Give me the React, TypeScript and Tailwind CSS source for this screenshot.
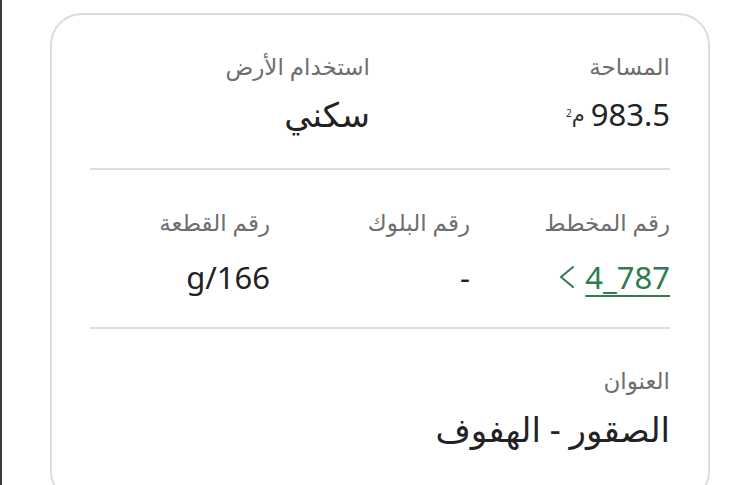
import * as React from "react"

const font = { fontFamily: '"Noto Sans", "DejaVu Sans", sans-serif' }

function Field({ label, children, className }: { label: string; children: React.ReactNode; className?: string }) {
  return (
    <div className={className}>
      <div className="text-[23px] leading-[30px] text-[#6e6e6e]">{label}</div>
      {children}
    </div>
  )
}

export default function App() {
  return (
    <div className="h-[485px] w-[750px] overflow-hidden bg-white border-l-2 border-[#3a3a3a]" style={font}>
      <div dir="rtl" className="ml-[48px] mt-[13px] w-[660px] h-[490px] rounded-[32px] border-2 border-[#dcdcdc] bg-white px-[38px]">
        <div className="flex pt-[36px] pb-[34px] border-b-2 border-[#dedede]">
          <Field label="المساحة" className="w-[300px]">
            <div className="mt-[13px] flex items-center gap-[6px] text-[31px] leading-[40px] text-[#222]">
              <span>983.5</span>
              <span className="text-[21px] text-[#333]">
                م<sup className="text-[10px]">2</sup>
              </span>
            </div>
          </Field>
          <Field label="استخدام الأرض" className="w-[280px]">
            <div className="mt-[13px] text-[34px] leading-[40px] text-[#222]">سكني</div>
          </Field>
        </div>

        <div className="flex pt-[37px] pb-[30px] border-b-2 border-[#dedede]">
          <Field label="رقم المخطط" className="w-[200px]">
            <div className="mt-[20px] flex items-center gap-[10px] text-[31px] leading-[40px] text-[#2f7a4f]">
              <span dir="ltr" className="underline decoration-[1.5px] underline-offset-[6px]">4_787</span>
              <svg width="16" height="26" viewBox="0 0 16 26" fill="none" stroke="#2f7a4f" strokeWidth="2" strokeLinecap="round" strokeLinejoin="round">
                <path d="M14 3 L2 13 L14 23" />
              </svg>
            </div>
          </Field>
          <Field label="رقم البلوك" className="w-[200px]">
            <div className="mt-[20px] text-[31px] leading-[40px] text-[#222]">-</div>
          </Field>
          <Field label="رقم القطعة" className="w-[180px]">
            <div dir="ltr" className="mt-[20px] text-right text-[31px] leading-[40px] text-[#222]">g/166</div>
          </Field>
        </div>

        <div className="pt-[36px]">
          <Field label="العنوان">
            <div className="mt-[14px] text-[34px] leading-[40px] text-[#222]">الصقور - الهفوف</div>
          </Field>
        </div>
      </div>
    </div>
  )
}
